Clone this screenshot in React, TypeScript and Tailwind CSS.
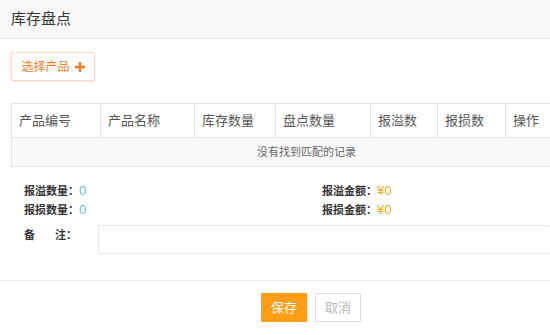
import React from 'react';

const cols = [
  { label: '产品编号', w: 'w-[89px]' },
  { label: '产品名称', w: 'w-[94px]' },
  { label: '库存数量', w: 'w-[81px]' },
  { label: '盘点数量', w: 'w-[95px]' },
  { label: '报溢数', w: 'w-[67px]' },
  { label: '报损数', w: 'w-[68px]' },
  { label: '操作', w: 'w-[60px]' },
];

const font = { fontFamily: '"Liberation Sans", "Noto Sans CJK SC", sans-serif' };

const App = () => {
  return (
    <div className="w-[550px] h-[335px] bg-white overflow-hidden flex flex-col" style={font}>
      {/* 标题 */}
      <div className="h-[39px] shrink-0 bg-[#f8f8f8] border-b border-[#e5e5e5] flex items-center px-[11px]">
        <h1 className="text-[15px] text-[#333]">库存盘点</h1>
      </div>

      <div className="pl-[11px] pt-[13px]">
        <button className="h-[29px] w-[84px] border border-[#fcd5c4] rounded-[2px] bg-white text-[#f37b1d] text-[12px] flex items-center justify-center gap-[5px] shadow-[0_1px_2px_rgba(0,0,0,0.08)]">
          选择产品
          <svg width="10" height="10" viewBox="0 0 10 10" className="mt-[1px]">
            <path d="M3.8 0h2.4v3.8H10v2.4H6.2V10H3.8V6.2H0V3.8h3.8z" fill="#f37b1d" />
          </svg>
        </button>
      </div>

      {/* 表格 */}
      <div className="pl-[11px] mt-[22px]">
        <div className="border border-[#e2e2e2] border-r-0 w-[560px]">
          <div className="flex h-[34px] border-b border-[#e2e2e2]">
            {cols.map((c, i) => (
              <div
                key={c.label}
                className={`${c.w} shrink-0 flex items-center pl-[7px] text-[13px] text-[#555] ${i < cols.length - 1 ? 'border-r border-[#e2e2e2]' : ''}`}
              >
                {c.label}
              </div>
            ))}
          </div>
          <div className="h-[28px] bg-[#f9f9f9] flex items-center pl-[245px] text-[11px] text-[#666]">
            没有找到匹配的记录
          </div>
        </div>
      </div>

      {/* 统计 */}
      <div className="flex mt-[16px] pl-[24px]">
        <div className="w-[298px] flex flex-col gap-[3px]">
          <div className="text-[11px] font-bold text-[#333] h-[16px] flex items-center">
            报溢数量：<span className="text-[13px] font-normal text-[#5bc0de]">0</span>
          </div>
          <div className="text-[11px] font-bold text-[#333] h-[16px] flex items-center">
            报损数量：<span className="text-[13px] font-normal text-[#5bc0de]">0</span>
          </div>
        </div>
        <div className="flex flex-col gap-[3px]">
          <div className="text-[11px] font-bold text-[#333] h-[16px] flex items-center">
            报溢金额：<span className="text-[13px] font-normal text-[#f5a623]">¥0</span>
          </div>
          <div className="text-[11px] font-bold text-[#333] h-[16px] flex items-center">
            报损金额：<span className="text-[13px] font-normal text-[#f5a623]">¥0</span>
          </div>
        </div>
      </div>

      {/* 备注 */}
      <div className="flex mt-[7px] pl-[24px]">
        <div className="w-[74px] pt-[2px] text-[11px] font-bold text-[#333] flex">
          <span>备</span>
          <span className="ml-[20px]">注：</span>
        </div>
        <textarea className="h-[29px] flex-1 border border-[#e5e5e5] border-r-0 rounded-[2px] resize-none outline-none" />
      </div>

      {/* 底部按钮 */}
      <div className="mt-[26px] border-t border-[#ececec] flex justify-center gap-[8px] pt-[12px] pl-[72px]">
        <button className="w-[46px] h-[29px] bg-[#ff9e16] text-white text-[13px] rounded-[1px]">保存</button>
        <button className="w-[46px] h-[29px] bg-white border border-[#dcdcdc] text-[#bbb] text-[13px] rounded-[1px]">取消</button>
      </div>
    </div>
  );
};

export default App;
